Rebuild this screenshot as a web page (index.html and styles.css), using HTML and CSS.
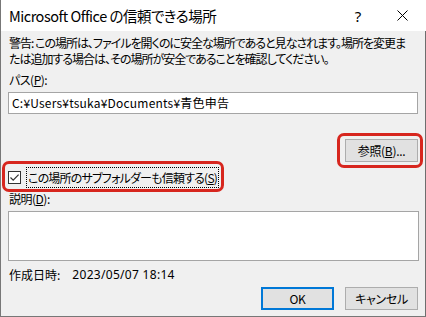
FILE: index.html
```html
<!DOCTYPE html>
<html lang="ja">
<head>
<meta charset="utf-8">
<link rel="stylesheet" href="styles.css">
</head>
<body>
<div class="window">
  <div class="titlebar">
    <div class="title">Microsoft Office の信頼できる場所</div>
    <div class="tb-help">?</div>
    <div class="tb-close">
      <svg width="11" height="11" viewBox="0 0 11 11"><path d="M0.5 0.5 L10.5 10.5 M10.5 0.5 L0.5 10.5" stroke="#000" stroke-width="1" fill="none"/></svg>
    </div>
  </div>
  <div class="body">
    <p class="warn">警告: この場所は、ファイルを開くのに安全な場所であると見なされます。場所を変更ま<br>たは追加する場合は、その場所が安全であることを確認してください。</p>
    <div class="label">パス(<u>P</u>):</div>
    <div class="input">C:¥Users¥tsuka¥Documents¥青色申告</div>
    <div class="browse-row">
      <div class="hl hl-browse"><div class="btn">参照(<u>B</u>)...</div></div>
    </div>
    <div class="check-row">
      <div class="hl hl-check">
        <span class="checkbox"><svg width="11" height="11" viewBox="0 0 11 11"><path d="M1.5 5.5 L4.2 8.2 L9.6 2.6" stroke="#333" stroke-width="1.2" fill="none"/></svg></span>
        <span class="check-label">この場所のサブフォルダーも信頼する(<u>S</u>)</span>
      </div>
    </div>
    <div class="label desc-label">説明(<u>D</u>):</div>
    <div class="textarea"></div>
    <div class="created"><span>作成日時:</span><span class="date">2023/05/07 18:14</span></div>
    <div class="actions">
      <div class="btn btn-ok">OK</div>
      <div class="btn">キャンセル</div>
    </div>
  </div>
</div>
</body>
</html>
```

FILE: styles.css
```css
* { box-sizing: border-box; }
html, body { margin: 0; padding: 0; }
body {
  width: 426px;
  height: 317px;
  overflow: hidden;
  font-family: "Noto Sans CJK JP", "Noto Sans", sans-serif;
  font-size: 12px;
  color: #000;
  font-feature-settings: "palt";
}
u { text-decoration: underline; text-underline-offset: 1px; }
.window {
  width: 426px;
  height: 317px;
  display: flex;
  flex-direction: column;
  border-left: 1px solid #777;
  border-bottom: 1px solid #777;
}
.titlebar {
  height: 31px;
  flex: none;
  background: #fff;
  display: flex;
  align-items: center;
  padding-left: 8px;
}
.title {
  font-size: 14.5px;
  letter-spacing: -0.5px;
  flex: 1;
  white-space: nowrap;
}
.tb-help {
  font-family: "Noto Sans", sans-serif;
  font-size: 15px;
  width: 44px;
  text-align: center;
}
.tb-close {
  width: 46px;
  display: flex;
  justify-content: center;
  padding-right: 1px;
}
.body {
  flex: 1;
  background: #f0f0f0;
  border-right: 1px solid #6e6e6e;
  padding: 4px 7px 0 7px;
  display: flex;
  flex-direction: column;
}
.warn {
  margin: 0 0 0 1px;
  line-height: 16px;
  white-space: nowrap;
  letter-spacing: -1px;
}
.label {
  margin: 5px 0 0 1px;
  line-height: 16px;
  letter-spacing: -0.5px;
}
.input {
  margin-top: 4px;
  height: 22px;
  width: 410px;
  background: #fff;
  border: 1px solid #a5a5a5;
  padding-left: 3px;
  line-height: 20px;
  white-space: nowrap;
  letter-spacing: 0.2px;
}
.browse-row {
  display: flex;
  justify-content: flex-end;
  margin-top: 25px;
}
.hl { position: relative; }
.hl::after {
  content: "";
  position: absolute;
  border: 3px solid #d7261e;
  border-radius: 7px;
  pointer-events: none;
}
.hl-browse::after { left: -8px; right: -5px; top: -6px; bottom: -6px; }
.btn {
  width: 73px;
  height: 23px;
  background: #e1e1e1;
  border: 1px solid #adadad;
  display: flex;
  align-items: center;
  justify-content: center;
  letter-spacing: -0.3px;
}
.check-row {
  display: flex;
  margin-top: 5px;
}
.hl-check {
  display: flex;
  align-items: center;
  height: 21px;
}
.hl-check::after { left: -6px; right: -5px; top: -6px; bottom: -4px; }
.checkbox {
  width: 13px;
  height: 13px;
  border: 1px solid #333;
  background: #fff;
  display: flex;
  align-items: center;
  justify-content: center;
  margin-right: 5px;
}
.check-label {
  border: 1px dotted #000;
  padding: 0 1px;
  height: 21px;
  line-height: 19px;
  white-space: nowrap;
  letter-spacing: -0.8px;
}
.desc-label { margin-top: 3px; }
.textarea {
  margin-top: 4px;
  width: 411px;
  height: 50px;
  background: #fff;
  border: 1px solid #a5a5a5;
}
.created {
  margin: 6px 0 0 1px;
  line-height: 16px;
  display: flex;
  gap: 12px;
}
.date { font-family: "Noto Sans", sans-serif; letter-spacing: 0.3px; }
.actions {
  display: flex;
  justify-content: flex-end;
  gap: 11px;
  margin-top: 4px;
}
.btn-ok {
  border: 2px solid #0078d7;
}
```
